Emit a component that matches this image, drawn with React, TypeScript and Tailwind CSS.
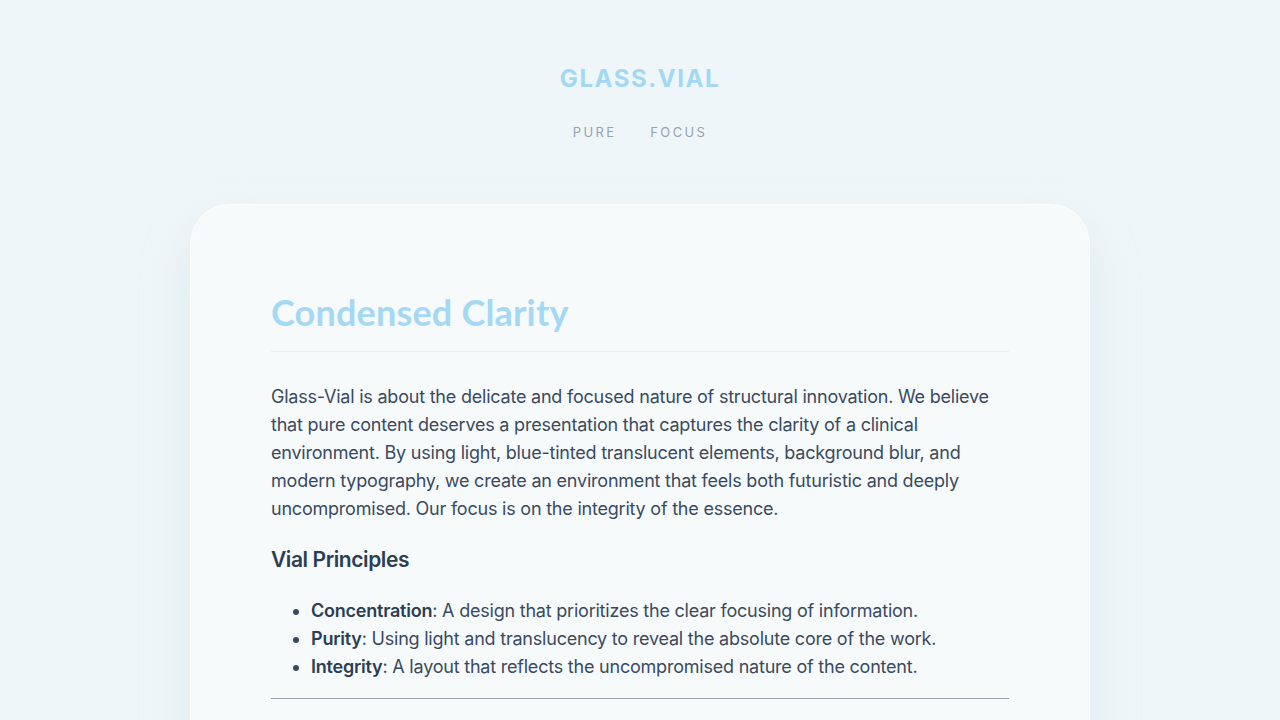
export default function App() {
  const principles = [
    { title: "Concentration", text: ": A design that prioritizes the clear focusing of information." },
    { title: "Purity", text: ": Using light and translucency to reveal the absolute core of the work." },
    { title: "Integrity", text: ": A layout that reflects the uncompromised nature of the content." },
  ];

  return (
    <div className="min-h-screen bg-[#eff6f9] font-['Inter',sans-serif] text-[#334155]">
      <header className="flex flex-col items-center pt-[63px]">
        <h1 className="text-[24px] leading-8 font-bold tracking-[0.065em] text-[#a3d8f5]">GLASS.VIAL</h1>
        <nav className="mt-[29px] flex gap-[34px] text-[13px] leading-4 tracking-[0.18em] text-[#94a3b0]">
          <span>PURE</span>
          <span>FOCUS</span>
        </nav>
      </header>

      <main className="mx-auto mt-[64px] w-[900px] rounded-[40px] border border-white/70 bg-[#f6fafb] px-20 pt-[85px] pb-20 shadow-[0_24px_50px_rgba(180,205,220,0.3)]">
        <h2 className="font-['Lato',sans-serif] text-[36px] leading-[44px] font-bold tracking-[0.005em] text-[#a5d8f4]">
          Condensed Clarity
        </h2>
        <div className="mt-[17px] h-px bg-[#e6eef2]" />

        <p className="mt-[31px] text-[18px] leading-7 tracking-[-0.012em] text-[#3a4a5e]">
          Glass-Vial is about the delicate and focused nature of structural innovation. We believe that pure content
          deserves a presentation that captures the clarity of a clinical environment. By using light, blue-tinted
          translucent elements, background blur, and modern typography, we create an environment that feels both
          futuristic and deeply uncompromised. Our focus is on the integrity of the essence.
        </p>

        <h3 className="mt-[23px] text-[21px] leading-7 font-semibold tracking-[-0.02em] text-[#2c3e52]">Vial Principles</h3>

        <ul className="mt-[23px] list-disc pl-10 text-[18px] leading-7 tracking-[-0.012em] text-[#3a4a5e]">
          {principles.map((p) => (
            <li key={p.title}>
              <strong className="font-semibold text-[#2c3e52]">{p.title}</strong>
              {p.text}
            </li>
          ))}
        </ul>

        <hr className="mt-[17px] border-t border-[#9aa3ab]" />
      </main>
    </div>
  );
}
